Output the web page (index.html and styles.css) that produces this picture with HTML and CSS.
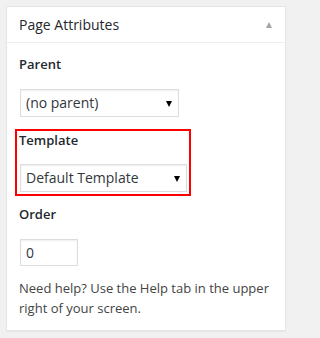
FILE: index.html
```html
<!DOCTYPE html>
<html lang="en">
<head>
<meta charset="utf-8">
<title>Page Attributes</title>
<link rel="stylesheet" href="styles.css">
</head>
<body>
<div class="postbox">
  <h2 class="hndle">Page Attributes<span class="toggle-indicator"></span></h2>
  <div class="inside">
    <p class="label">Parent</p>
    <div class="select-wrap">
      <select class="select select-parent"><option>(no parent)</option></select>
      <span class="caret"></span>
    </div>
    <div class="highlight">
      <p class="label label-tight">Template</p>
      <div class="select-wrap">
        <select class="select select-template"><option>Default Template</option></select>
        <span class="caret"></span>
      </div>
    </div>
    <p class="label label-order">Order</p>
    <div class="input-wrap">
      <input class="order-input" type="text" value="0">
    </div>
    <p class="help">Need help? Use the Help tab in the upper right of your screen.</p>
  </div>
</div>
</body>
</html>
```

FILE: styles.css
```css
html, body {
  margin: 0;
  padding: 0;
}
body {
  background: #f1f1f1;
  padding: 6px;
  font-family: "Open Sans", "Noto Sans", sans-serif;
  color: #444;
}
.postbox {
  width: 280px;
  box-sizing: border-box;
  background: #fff;
  border: 1px solid #e5e5e5;
  box-shadow: 0 1px 1px rgba(0, 0, 0, 0.04);
}
.hndle {
  position: relative;
  margin: 0;
  padding: 8px 12px;
  font-size: 14px;
  line-height: 19px;
  font-weight: 400;
  color: #23282d;
  border-bottom: 1px solid #eee;
}
.toggle-indicator {
  position: absolute;
  right: 13px;
  top: 15px;
  width: 0;
  height: 0;
  border-left: 3.5px solid transparent;
  border-right: 3.5px solid transparent;
  border-bottom: 6px solid #a0a5aa;
}
.inside {
  padding: 0 12px 12px;
}
.label {
  margin: 11px 0 0;
  font-size: 13px;
  line-height: 20px;
  font-weight: 600;
  color: #23282d;
}
.label-tight {
  margin: 0;
  line-height: 18px;
}
.label-order {
  margin-top: 8px;
}
.select-wrap {
  position: relative;
  display: flex;
  width: fit-content;
  margin-top: 14px;
}
.select {
  display: block;
  margin: 1px;
  height: 28px;
  box-sizing: border-box;
  padding: 0 5px;
  border: 1px solid #ddd;
  border-radius: 0;
  box-shadow: inset 0 1px 2px rgba(0, 0, 0, 0.07);
  background: #fff;
  font-family: "Open Sans", "Noto Sans", sans-serif;
  font-size: 14px;
  line-height: 26px;
  color: #32373c;
  -webkit-appearance: none;
  appearance: none;
  outline: none;
}
.select-parent {
  width: 159px;
}
.select-template {
  width: 167px;
}
.caret {
  position: absolute;
  right: 8px;
  top: 50%;
  margin-top: -2px;
  width: 0;
  height: 0;
  border-left: 3.5px solid transparent;
  border-right: 3.5px solid transparent;
  border-top: 6px solid #000;
}
.highlight {
  width: fit-content;
  margin: 11px 0 0 -4px;
  padding: 0 1px 1px 2px;
  border: 2px solid #f00;
}
.input-wrap {
  display: flex;
  margin-top: 14px;
}
.order-input {
  display: block;
  margin: 1px;
  width: 58px;
  height: 27px;
  box-sizing: border-box;
  padding: 0 5px;
  border: 1px solid #ddd;
  border-radius: 0;
  box-shadow: inset 0 1px 2px rgba(0, 0, 0, 0.07);
  background: #fff;
  font-family: "Open Sans", "Noto Sans", sans-serif;
  font-size: 14px;
  color: #32373c;
  outline: none;
}
.help {
  margin: 12px 0 0;
  font-size: 13px;
  line-height: 19.5px;
  color: #444;
}
```
